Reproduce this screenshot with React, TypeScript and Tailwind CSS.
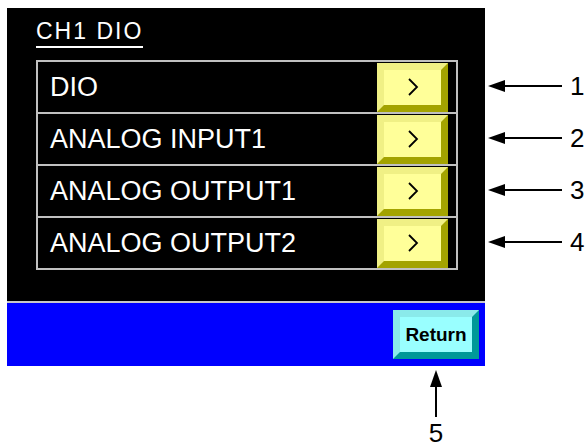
import React from 'react';

const rows = ["DIO", "ANALOG INPUT1", "ANALOG OUTPUT1", "ANALOG OUTPUT2"];

const Chevron = () => (
  <svg width="14" height="20" viewBox="0 0 14 20">
    <polyline points="3,2 11,10 3,18" fill="none" stroke="#000" strokeWidth="1.8" />
  </svg>
);

const LeftArrow = () => (
  <svg width="74" height="14" viewBox="0 0 74 14">
    <polygon points="0,7 17,1 17,13" fill="#000" />
    <line x1="15" y1="7" x2="74" y2="7" stroke="#000" strokeWidth="2" />
  </svg>
);

const UpArrow = () => (
  <svg width="14" height="47" viewBox="0 0 14 47">
    <polygon points="7,0 1,17 13,17" fill="#000" />
    <line x1="7" y1="15" x2="7" y2="47" stroke="#000" strokeWidth="2" />
  </svg>
);

const App = () => {
  return (
    <div
      className="w-[587px] h-[444px] bg-white overflow-hidden pt-[8px] pl-[7px] flex flex-col"
      style={{ fontFamily: '"Liberation Sans", Arial, sans-serif' }}
    >
      <div className="flex">
        {/* screen panel */}
        <div className="w-[478px] h-[293px] bg-black pl-[29px]">
          <div className="h-[52px] flex items-end pb-[12px]">
            <span className="text-[23px] leading-none tracking-[2px] text-white pb-[3px] border-b-2 border-white">
              CH1 DIO
            </span>
          </div>
          <div className="w-[422px] border-x-2 border-t-2 border-[#c0c0c0]">
            {rows.map((label) => (
              <div
                key={label}
                className="h-[52px] border-b-2 border-[#c0c0c0] flex items-center justify-between pl-[12px] pr-[8px]"
              >
                <span className="text-white text-[27px] leading-none">{label}</span>
                <button className="w-[71px] h-[49px] border-[7px] border-t-[#f0f085] border-l-[#f0f085] border-b-[#a3a300] border-r-[#a3a300] bg-[#ffff99] flex items-center justify-center">
                  <Chevron />
                </button>
              </div>
            ))}
          </div>
        </div>

        {/* callouts 1-4 */}
        <div className="pl-[3px] pt-[52px] flex flex-col">
          {rows.map((label, i) => (
            <div key={label} className="h-[52px] flex items-center">
              <LeftArrow />
              <span className="ml-[8px] text-[26px] leading-none text-black">{i + 1}</span>
            </div>
          ))}
        </div>
      </div>

      <div className="w-[478px] h-[2px] bg-[#c8c8c8]" />

      <div className="w-[478px] h-[63px] bg-[#0000ff] flex items-center justify-end pr-[6px]">
        <button className="w-[86px] h-[49px] border-[7px] border-t-[#8aeaea] border-l-[#8aeaea] border-b-[#009999] border-r-[#009999] bg-[#99ffff] flex items-center justify-center">
          <span className="text-[19px] font-bold leading-none text-black">Return</span>
        </button>
      </div>

      {/* callout 5 */}
      <div className="w-[478px] flex justify-end pr-[6px]">
        <div className="w-[86px] flex flex-col items-center pt-[4px]">
          <UpArrow />
          <span className="mt-[6px] text-[26px] leading-[20px] text-black">5</span>
        </div>
      </div>
    </div>
  );
};

export default App;
